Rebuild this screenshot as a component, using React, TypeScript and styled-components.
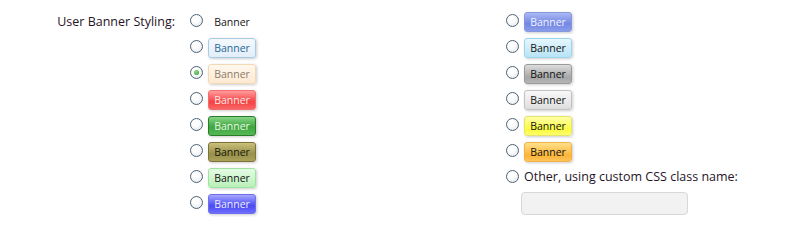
import React from "react";
import styled, { createGlobalStyle, css } from "styled-components";

const GlobalStyle = createGlobalStyle`
    html, body {
        margin: 0;
        padding: 0;
        background: #ffffff;
    }
    body {
        font-family: "Open Sans", "Noto Sans", sans-serif;
        color: #261426;
    }
`;

type BannerKind =
    | "hidden"
    | "primary"
    | "secondary"
    | "red"
    | "green"
    | "olive"
    | "lightGreen"
    | "blue"
    | "royalBlue"
    | "skyBlue"
    | "gray"
    | "silver"
    | "yellow"
    | "orange";

const bannerStyles: Record<BannerKind, ReturnType<typeof css>> = {
    hidden: css`
        background: transparent;
        border-color: transparent;
        box-shadow: none;
        color: #141414;
    `,
    primary: css`
        background: linear-gradient(#f4f9fd, #e2eef9);
        border-color: #a8cbe5;
        color: #2a6796;
    `,
    secondary: css`
        background: linear-gradient(#fff8ee, #fde9d2);
        border-color: #f3d8b4;
        color: #8c7b6a;
    `,
    red: css`
        background: linear-gradient(#ff9c9c, #f54242 60%, #f86565);
        border-color: #f56c6c;
        color: #fde8e8;
    `,
    green: css`
        background: linear-gradient(#86d586, #3fa63f 55%, #55b855);
        border-color: #2a7b2a;
        color: #e8f7e8;
    `,
    olive: css`
        background: linear-gradient(#c9c07c, #98904a 60%, #aaa25a);
        border-color: #7c7436;
        color: #1a1a0a;
    `,
    lightGreen: css`
        background: linear-gradient(#e5fbe5, #b8f0b8);
        border-color: #9ee49e;
        color: #111;
    `,
    blue: css`
        background: linear-gradient(#a6a6ff, #4b4bf3 60%, #6d6dff);
        border-color: #6e6ef0;
        color: #ececff;
    `,
    royalBlue: css`
        background: linear-gradient(#a9b8f4, #7388e3 60%, #8a9cea);
        border-color: #8798dc;
        color: #f2f4ff;
    `,
    skyBlue: css`
        background: linear-gradient(#e6f7fd, #b7e4f5);
        border-color: #9dd6ea;
        color: #111;
    `,
    gray: css`
        background: linear-gradient(#dcdcdc, #a6a6a6 70%, #b6b6b6);
        border-color: #9a9a9a;
        color: #111;
    `,
    silver: css`
        background: linear-gradient(#f8f8f8, #dedede);
        border-color: #c2c2c2;
        color: #111;
    `,
    yellow: css`
        background: linear-gradient(#ffffa8, #fbfb3e 70%, #ffff70);
        border-color: #e4e46a;
        color: #111;
    `,
    orange: css`
        background: linear-gradient(#ffe08a, #fcb437 70%, #ffc45a);
        border-color: #efb14a;
        color: #111;
    `,
};

const Form = styled.div`
    display: grid;
    grid-template-columns: 175px 1fr;
    column-gap: 15px;
    padding-top: 9px;
`;

const Label = styled.div`
    text-align: right;
    font-size: 12.5px;
    line-height: 26px;
    color: #261426;
    white-space: nowrap;
`;

const Columns = styled.div`
    display: grid;
    grid-template-columns: 316px 1fr;
`;

const List = styled.ul`
    list-style: none;
    margin: 0;
    padding: 0;
`;

const Item = styled.li`
    display: flex;
    align-items: center;
    gap: 5px;
    height: 26px;
`;

const Radio = styled.span<{ $checked?: boolean }>`
    position: relative;
    flex: none;
    width: 11px;
    height: 11px;
    border-radius: 50%;
    border: 1px solid #4d6276;
    background: radial-gradient(circle at 40% 35%, #ffffff 30%, #dfe3e8 100%);
    margin-top: -4px;

    ${(p) =>
        p.$checked &&
        css`
            &::after {
                content: "";
                position: absolute;
                left: 3px;
                top: 3px;
                width: 5px;
                height: 5px;
                border-radius: 50%;
                background: radial-gradient(circle at 40% 35%, #8fdc7d, #2f9a2c);
            }
        `}
`;

const Banner = styled.span<{ $kind: BannerKind }>`
    display: inline-flex;
    align-items: center;
    justify-content: center;
    box-sizing: border-box;
    width: 48px;
    height: 20px;
    border: 1px solid;
    border-radius: 3px;
    font-size: 10.5px;
    box-shadow: 1px 1px 3px rgba(0, 0, 0, 0.2);
    ${(p) => bannerStyles[p.$kind]}
`;

const OtherText = styled.span`
    font-size: 12.5px;
    color: #261426;
    margin-top: -4px;
`;

const OtherInput = styled.input`
    display: block;
    box-sizing: border-box;
    width: 167px;
    height: 23px;
    margin: 1px 0 0 15px;
    border: 1px solid #d8d8d8;
    border-radius: 4px;
    background: #f2f2f2;
    outline: none;
`;

const leftBanners: BannerKind[] = [
    "hidden",
    "primary",
    "secondary",
    "red",
    "green",
    "olive",
    "lightGreen",
    "blue",
];

const rightBanners: BannerKind[] = [
    "royalBlue",
    "skyBlue",
    "gray",
    "silver",
    "yellow",
    "orange",
];

const App = () => {
    return (
        <>
            <GlobalStyle />
            <Form>
                <Label>User Banner Styling:</Label>
                <Columns>
                    <List>
                        {leftBanners.map((kind) => (
                            <Item key={kind}>
                                <Radio $checked={kind === "secondary"} />
                                <Banner $kind={kind}>Banner</Banner>
                            </Item>
                        ))}
                    </List>
                    <List>
                        {rightBanners.map((kind) => (
                            <Item key={kind}>
                                <Radio />
                                <Banner $kind={kind}>Banner</Banner>
                            </Item>
                        ))}
                        <Item>
                            <Radio />
                            <OtherText>Other, using custom CSS class name:</OtherText>
                        </Item>
                        <OtherInput type="text" />
                    </List>
                </Columns>
            </Form>
        </>
    );
};

export default App;
